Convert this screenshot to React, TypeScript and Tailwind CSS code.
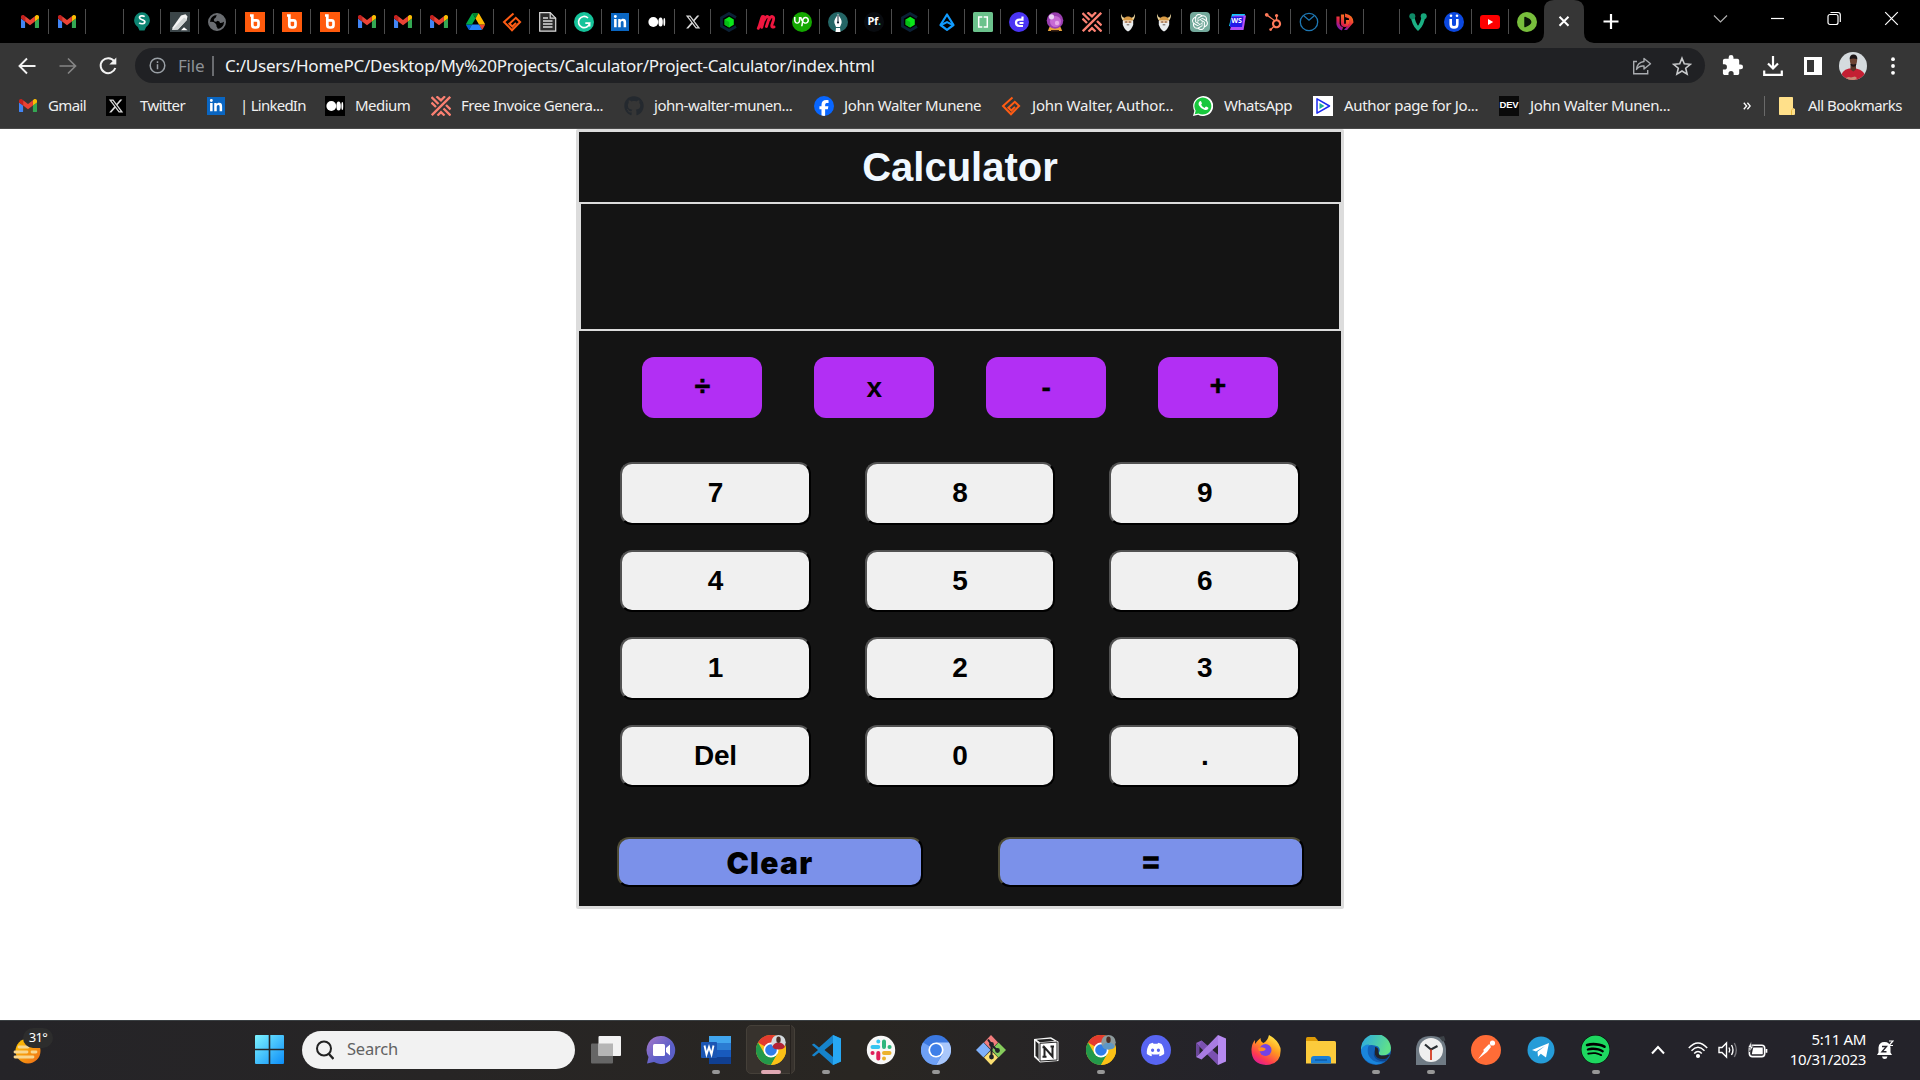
import React from "react";
import { FaXTwitter, FaLinkedinIn, FaFacebookF, FaGithub, FaHubspot, FaUpwork, FaDiscord, FaSpotify } from "react-icons/fa6";
import { SiOpenai } from "react-icons/si";

/* ---------- shared brand marks ---------- */

const Gmail = ({ c = "w-[18px]" }: { c?: string }) => (
  <svg viewBox="52 42 88 66" className={c}>
    <path fill="#4285f4" d="M58 108h14V74L52 59v43c0 3.32 2.69 6 6 6" />
    <path fill="#34a853" d="M120 108h14c3.32 0 6-2.69 6-6V59l-20 15" />
    <path fill="#fbbc04" d="M120 48v26l20-15v-8c0-7.42-8.47-11.65-14.4-7.2" />
    <path fill="#ea4335" d="M72 74V48l24 18 24-18v26L96 92" />
    <path fill="#c5221f" d="M52 51v8l20 15V48l-5.6-4.2c-5.94-4.45-14.4-.22-14.4 7.2" />
  </svg>
);

const Drive = () => (
  <svg viewBox="0 0 87.3 78" className="w-[19px]">
    <path fill="#0066da" d="m6.6 66.85 3.85 6.65c.8 1.4 1.95 2.5 3.3 3.3l13.75-23.8h-27.5c0 1.55.4 3.1 1.2 4.5z" />
    <path fill="#00ac47" d="m43.65 25-13.75-23.8c-1.35.8-2.5 1.9-3.3 3.3l-25.4 44a9.06 9.06 0 0 0-1.2 4.5h27.5z" />
    <path fill="#ea4335" d="m73.55 76.8c1.35-.8 2.5-1.9 3.3-3.3l1.6-2.75 7.65-13.25c.8-1.4 1.2-2.95 1.2-4.5h-27.502l5.852 11.5z" />
    <path fill="#00832d" d="m43.65 25 13.75-23.8c-1.35-.8-2.9-1.2-4.5-1.2h-18.5c-1.6 0-3.15.45-4.5 1.2z" />
    <path fill="#2684fc" d="m59.8 53h-32.3l-13.75 23.8c1.35.8 2.9 1.2 4.5 1.2h50.8c1.6 0 3.15-.45 4.5-1.2z" />
    <path fill="#ffba00" d="m73.4 26.5-12.7-22c-.8-1.4-1.95-2.5-3.3-3.3l-13.75 23.8 16.15 28h27.45c0-1.55-.4-3.1-1.2-4.5z" />
  </svg>
);

const Pin = () => (
  <svg viewBox="0 0 20 22" className="h-[21px] w-[18px]">
    <path fill="#0d8573" d="M10 0.8a8.8 8.8 0 0 1 8.8 8.8c0 3.4-2 5.6-4.2 7.6L12.8 21H7.2L5.4 17.2C3.2 15.2 1.2 13 1.2 9.6A8.8 8.8 0 0 1 10 .8z" />
    <path d="M13 5.6C11.5 4.4 7.2 4.2 7.2 6.8c0 2.7 6 1.7 6 4.6 0 2.700-4.600 2.500-6.400 1.100" fill="none" stroke="#fff" strokeWidth="1.9" />
  </svg>
);

const Blade = () => (
  <svg viewBox="0 0 20 20" className="size-5">
    <rect width="20" height="20" fill="#3b4548" />
    <path d="M2.500 15.500 11 3.500 15.500 2.200 17.500 4.500 16.500 8.500 8 17.500 2.200 18z" fill="#f4f4f4" />
    <path d="M2.200 18 14 5.500 17 7.500 8 17.500z" fill="#d2d6d6" />
    <path d="M11 18.200l3-3 3.600 3z" fill="#fff" />
  </svg>
);

const Globe = () => (
  <svg viewBox="0 0 20 20" className="size-5">
    <circle cx="10" cy="10" r="8" fill="none" stroke="#6a6d71" strokeWidth="2" />
    <path d="M9.500 1.500Q10 5 7.500 6.500q-1.500 1.500 0 3 2 .5 3-.8 2.500.5 2.500 2.300 2 .5 5-2Q17 2.500 9.500 1.500zM2 10q4-.8 6 1t1.500 3.500Q11 16 11 18.500 3 18 2 10z" fill="#6a6d71" />
  </svg>
);

const BSquare = () => (
  <svg viewBox="0 0 20 20" className="size-5">
    <rect width="20" height="20" fill="#ff5a0c" />
    <path d="M5 3.500h3.700M7.300 3.500v8.500M7.300 8.300h4.200q2 0 2 2v2.700q0 2.500-2.500 2.500h-1.200q-2.500 0-2.500-2.500z" fill="none" stroke="#fff" strokeWidth="2.700" />
  </svg>
);

const OrangeDiamond = () => (
  <svg viewBox="0 0 20 20" className="size-5">
    <path d="M11.500 1.500 2 10l8 8.200L18.100 10l-4.300-4.200-6.400 6 3 2.700 3.600-3.600" fill="none" stroke="#ff5c14" strokeWidth="2" />
  </svg>
);

const Doc = () => (
  <svg viewBox="0 0 20 20" className="size-5" fill="none" stroke="#dcdcdc" strokeWidth="1.200">
    <path d="M1.700.7h10.500l5.500 5.500v13H1.700z" fill="#2c2c2c" />
    <path d="M12.200.7v5.500h5.500" />
    <path d="M5 6h5M5 9h9.500M5 12h9.500M5 15h9.500" strokeWidth="1.400" />
  </svg>
);

const Grammarly = () => (
  <svg viewBox="0 0 20 20" className="size-5">
    <circle cx="10" cy="10" r="10" fill="#15c39a" />
    <path d="M14 6a5.600 5.600 0 1 0 1.600 5.200h-4.300M15.600 14.600v-3.800" fill="none" stroke="#fff" strokeWidth="1.700" />
  </svg>
);

const LinkedIn = () => (
  <span className="flex size-[18px] items-center justify-center bg-[#0a66c2]">
    <FaLinkedinIn className="size-[14px] text-white" />
  </span>
);

const MediumDots = () => (
  <svg viewBox="0 0 20 20" className="size-5" fill="#fff">
    <circle cx="6.300" cy="10" r="4.900" />
    <ellipse cx="13.600" cy="10" rx="2.200" ry="4.500" />
    <ellipse cx="17.300" cy="10" rx=".9" ry="4.100" />
  </svg>
);

const Cube = () => (
  <svg viewBox="0 0 20 20" className="size-5">
    <path d="M17 5.500 10 1.500 2.500 5.700v8.600L10 18.500l7-4" fill="none" stroke="#0b2136" strokeWidth="2.800" />
    <path d="M10.200 4.800 14.800 7.500v5.200l-4.600 2.700-4.600-2.700V7.500z" fill="#0be61a" />
    <path d="M10.200 10v5.400l-4.600-2.700V7.500z" fill="#06bd16" />
  </svg>
);

const Meetup = () => (
  <svg viewBox="0 0 22 20" className="h-[18px] w-[21px]">
    <path d="M3 17C5.500 12 6 6 7.500 4q2-1 2 2L6.800 16M9.500 8q2-4.500 4-4t1.200 3L12 15M14.700 8q2-4.500 4-4t1 4.500l-1.700 5q-.3 3 2.500 2" fill="none" stroke="#f0163f" strokeWidth="3.200" strokeLinecap="round" strokeLinejoin="round" />
  </svg>
);

const Upwork = () => (
  <span className="flex size-5 items-center justify-center rounded-full bg-[#14a800]">
    <FaUpwork className="size-[15px] text-white" />
  </span>
);

const Pen = () => (
  <svg viewBox="0 0 20 20" className="size-5">
    <circle cx="10" cy="10" r="10" fill="#246666" />
    <path d="M10 1.500c1 3.500 4.200 5.500 3.600 9.500L12 15H8l-1.600-4C5.800 7 9 5 10 1.500z" fill="#fff" />
    <path d="M8 16h4l.5 4h-5z" fill="#fff" />
    <path d="M10 3v7" stroke="#123" strokeWidth="1" />
    <circle cx="10" cy="10.500" r="1.100" fill="#123" />
  </svg>
);

const Pf = () => (
  <span className="flex size-5 items-center justify-center rounded-full bg-[#080b0f] text-[11px] font-bold tracking-tight text-white">
    Pf<span className="text-[#25b9b0]">.</span>
  </span>
);

const BlueA = () => (
  <svg viewBox="0 0 20 20" className="size-5">
    <path d="M10 2.500 3.500 13 10 17.800 16.500 13z" fill="none" stroke="#119cff" strokeWidth="2.200" strokeLinejoin="round" />
    <path d="M4 13l6-3 6 3" fill="none" stroke="#119cff" strokeWidth="2" />
  </svg>
);

const Brackets = () => (
  <svg viewBox="0 0 20 20" className="size-5">
    <rect width="20" height="20" rx="1.500" fill="#6bc28c" />
    <path d="M9.300 5H5.700v10H9.300M10.700 5h3.600v10H10.700" fill="none" stroke="#fff" strokeWidth="1.500" />
  </svg>
);

const PurpleC = () => (
  <svg viewBox="0 0 20 20" className="size-5">
    <circle cx="10" cy="10" r="10" fill="#4a34f5" />
    <path d="M13.500 4.500v3.200h-3Q7 7.700 7 10.800t3.500 3.200h3.500M14.500 11h-4" fill="none" stroke="#fff" strokeWidth="2.200" />
  </svg>
);

const Crystal = () => (
  <svg viewBox="0 0 20 20" className="size-5">
    <path d="M4.500 15h11l1.700 4H2.800z" fill="#e9a33a" />
    <path d="M6 18h8v1.500H6z" fill="#3a2010" />
    <circle cx="10" cy="8.500" r="8.300" fill="#9a3fb0" />
    <circle cx="10.500" cy="9.500" r="5.500" fill="#c66ad4" />
    <circle cx="6.500" cy="4.800" r="2.600" fill="#ead0f2" />
    <circle cx="12" cy="11" r="2.200" fill="#e6a8ea" />
  </svg>
);

const Lattice = () => (
  <svg viewBox="0 0 20 20" className="size-5" fill="none" stroke="#fb8072" strokeWidth="2.300">
    <path d="M.8 19.200 19.200.8M.5 1l7 7M5.500.3 10 4.300 14 .3M12.500 12.500 19.500 19.500M6.500 19.500l3.500-3.300 3.500 3.300M.5 6.500 5 11M15 9l4.500 4.500" />
  </svg>
);

const Viking = () => (
  <svg viewBox="0 0 20 20" className="size-5">
    <path d="M3 1.500C4 5 5 5.500 7 6l-1.500 3C3.500 7.500 2.800 4.500 3 1.500zM17 1.500C16 5 15 5.500 13 6l1.500 3c2-1.500 2.700-4.500 2.500-7.500z" fill="#f0d9a0" />
    <path d="M5 9c0-6 10-6 10 0z" fill="#d89a45" />
    <path d="M4.800 8.500h10.400v4.200q-1.700 5-5.200 6.800-3.500-1.800-5.200-6.800z" fill="#e9ecee" />
    <path d="M6.500 9h7v2h-7z" fill="#e3b691" />
    <path d="M7.300 10h1.700M11 10h1.700M8.700 12.800h2.600" stroke="#4a3a30" strokeWidth=".8" />
  </svg>
);

const Gpt = () => (
  <span className="flex size-5 items-center justify-center rounded-[4px] bg-[#74aa9c]">
    <SiOpenai className="size-4 text-white" />
  </span>
);

const WS = () => (
  <span className="relative flex size-[18px] items-center justify-center">
    <svg viewBox="0 0 18 18" className="absolute inset-0 size-[18px]">
      <path d="M4 1h13l-2 12H1z" fill="#12c8f5" />
      <path d="M6 2.500h12L15.500 17H2z" fill="#b44df8" />
      <path d="M3.500 3.500h12L14 14H1.800z" fill="#2418e8" />
    </svg>
    <span className="relative text-[7px] font-bold text-white">WS</span>
  </span>
);

const BlueRing = () => (
  <svg viewBox="0 0 20 20" className="size-5" fill="none" stroke="#1e78b4" strokeWidth="1.300">
    <circle cx="10" cy="10" r="8.700" />
    <path d="M4.500 3.500 10 8.200l5.500-4.700" />
  </svg>
);

const Flame = () => (
  <svg viewBox="0 0 20 20" className="size-5">
    <defs>
      <linearGradient id="fl" x1="0" y1="1" x2=".6" y2="0">
        <stop offset="0" stopColor="#6a1bc0" /><stop offset=".45" stopColor="#e01e4a" /><stop offset="1" stopColor="#ff7a18" />
      </linearGradient>
    </defs>
    <path d="M3 4.500V12q.5 3.500 4.500 5M7.500 2.500V11q0 2.500 2.500 2.500t2.500-2.500V8" fill="none" stroke="url(#fl)" strokeWidth="3.200" />
    <path d="M10 1.500q8.500 1.500 8.500 9L12 18H9l5-6V6.500L10 5z" fill="url(#fl)" />
  </svg>
);

const GreenV = () => (
  <svg viewBox="0 0 20 20" className="size-5">
    <path d="M4.500 4q1 8 5.500 12.500Q14.500 12 15.500 4" fill="none" stroke="#1bb184" strokeWidth="3.600" strokeLinecap="round" />
    <circle cx="4.300" cy="4.200" r="3" fill="#0f8a66" /><circle cx="15.700" cy="4.200" r="3" fill="#17a67b" />
  </svg>
);

const UBlue = () => (
  <svg viewBox="0 0 20 20" className="size-5">
    <circle cx="10" cy="10" r="10" fill="#0b48e0" />
    <path d="M6.700 7v5.200q0 3.200 3.300 3.200t3.300-3.200V7" fill="none" stroke="#fff" strokeWidth="2.600" />
    <circle cx="7" cy="3.800" r="1.300" fill="#fff" /><circle cx="13" cy="3.800" r="1.300" fill="#fff" />
  </svg>
);

const YouTube = () => (
  <svg viewBox="0 0 20 14" className="w-5">
    <rect width="20" height="14" rx="3" fill="#f00" />
    <path d="M8 4l5.200 3L8 10z" fill="#fff" />
  </svg>
);

const GreenPlay = () => (
  <svg viewBox="0 0 20 20" className="size-5">
    <circle cx="10" cy="10" r="10" fill="#78be3c" />
    <path d="M8 5.500Q13.500 7.500 13.700 10 13.500 12.500 8 14.500z" fill="#0a1408" stroke="#0a1408" strokeWidth="1.500" strokeLinejoin="round" />
  </svg>
);

const XMark = () => <FaXTwitter className="size-4 text-[#d8d8d8]" />;

const wideTabs: React.ReactNode[] = [<Gmail />, <Gmail />, null, <Pin />, <Blade />, <Globe />, <BSquare />, <BSquare />, <BSquare />];
const narrowTabs: React.ReactNode[] = [
  <Gmail />, <Gmail />, <Gmail />, <Drive />, <OrangeDiamond />, <Doc />, <Grammarly />, <LinkedIn />, <MediumDots />, <XMark />,
  <Cube />, <Meetup />, <Upwork />, <Pen />, <Pf />, <Cube />, <BlueA />, <Brackets />, <PurpleC />, <Crystal />, <Lattice />,
  <Viking />, <Viking />, <Gpt />, <WS />, <FaHubspot className="size-[18px] text-[#ff7a59]" />, <BlueRing />, <Flame />, null,
  <GreenV />, <UBlue />, <YouTube />, <GreenPlay />,
];

function TabStrip() {
  return (
    <div className="flex h-[43px] shrink-0 bg-black pl-[11px]">
      {wideTabs.map((t, i) => (
        <div key={i} className="flex w-[37.5px] shrink-0 items-center">
          <div className="flex flex-1 justify-center">{t}</div>
          <div className="-ml-px h-[25px] w-px bg-[#4c4c4c]" />
        </div>
      ))}
      {narrowTabs.map((t, i) => (
        <div key={i} className="flex w-[36.25px] shrink-0 items-center">
          <div className="flex flex-1 justify-center">{t}</div>
          <div className={i < 32 ? "-ml-px h-[25px] w-px bg-[#4c4c4c]" : "hidden"} />
        </div>
      ))}
      <svg viewBox="0 0 60 43" className="-ml-[10px] h-[43px] w-[60px] shrink-0">
        <path d="M0 43Q9 42 9 33V10Q9 0 19 0H39Q49 0 49 10V33Q49 42 59 43z" fill="#363636" />
        <path d="M24.500 16.800l9 9M33.500 16.800l-9 9" stroke="#fff" strokeWidth="2" />
      </svg>
      <svg viewBox="0 0 20 20" className="mt-[11px] ml-[6px] size-5 shrink-0"><path d="M10 3v15M2.500 10.500h15" stroke="#fff" strokeWidth="2.200" /></svg>
      <div className="mr-[19px] ml-auto flex items-start gap-[38px] pt-[9px]">
        <svg viewBox="0 0 19 19" className="size-[19px]" fill="none" stroke="#b0b0b0" strokeWidth="1.200"><path d="M3 6.500l6.500 6.500L16 6.500" /></svg>
        <svg viewBox="0 0 19 19" className="size-[19px]" stroke="#fff" strokeWidth="1.200"><path d="M3 9.500h13" /></svg>
        <svg viewBox="0 0 19 19" className="size-[19px]" fill="none" stroke="#fff" strokeWidth="1.200"><rect x="3" y="5.500" width="10" height="10" rx="2" /><path d="M5.500 3.500H13q2.300 0 2.300 2.300V13" /></svg>
        <svg viewBox="0 0 19 19" className="size-[19px]" stroke="#fff" strokeWidth="1.200"><path d="M3.200 3.200l12.600 12.600M15.800 3.200 3.200 15.800" /></svg>
      </div>
    </div>
  );
}

function Toolbar() {
  return (
    <div className="flex h-[45px] shrink-0 items-center pl-[17px]">
      <svg viewBox="0 0 20 20" className="mr-[21px] size-5" fill="none" stroke="#f2f2f2" strokeWidth="1.900"><path d="M18.500 10H3M10 2.500 2.500 10l7.500 7.500" /></svg>
      <svg viewBox="0 0 20 20" className="mr-[20px] size-5" fill="none" stroke="#858585" strokeWidth="1.700"><path d="M1.500 10H17M10 2.500 17.500 10 10 17.500" /></svg>
      <svg viewBox="0 0 20 20" className="mr-[17px] size-5"><path d="M16.200 5.200A7.500 7.500 0 1 0 17.300 12" fill="none" stroke="#f2f2f2" strokeWidth="2" /><path d="M18.300 1.500v7h-7z" fill="#f2f2f2" /></svg>
      <div className="flex h-[35px] w-[1570px] shrink-0 items-center rounded-full bg-[#202124] pr-[13px] pl-[14px]">
        <svg viewBox="0 0 17 17" className="size-[17px]" fill="none" stroke="#9aa0a6" strokeWidth="1.500"><circle cx="8.500" cy="8.500" r="7.300" /><path d="M8.500 7.300v5M8.500 4.200v1.800" /></svg>
        <span className="ml-3 w-[34px] text-[17px] tracking-[-0.2px] text-[#8d9196]">File</span>
        <div className="h-5 w-[2px] bg-[#6a6c70]" />
        <span className="ml-[11px] text-[17px] tracking-[-0.25px] whitespace-nowrap text-[#f1f3f4]">C:/Users/HomePC/Desktop/My%20Projects/Calculator/Project-Calculator/index.html</span>
        <svg viewBox="0 0 20 20" className="ml-auto size-5" fill="none" stroke="#a9acb0" strokeWidth="1.400"><path d="M5 5.500H1.700v12.300h14V14" /><path d="M12 2.500l6.500 5.200L12 13v-3Q7 9.500 4.500 13.500 5 6.500 12 5.500z" strokeLinejoin="round" /></svg>
        <svg viewBox="0 0 20 20" className="ml-5 size-5" fill="none" stroke="#c8cacc" strokeWidth="1.600"><path d="M10 2.200l2.300 5.600 6 .5-4.600 3.900 1.400 5.900L10 15l-5.100 3.100 1.400-5.900-4.600-3.900 6-.5z" /></svg>
      </div>
      <svg viewBox="0 0 24 24" className="ml-[16px] size-[23px]" fill="#fff"><path d="M20.500 11H19V7c0-1.100-.9-2-2-2h-4V3.500a2.500 2.500 0 0 0-5 0V5H4c-1.100 0-2 .9-2 2v3.800h1.500a2.700 2.700 0 0 1 0 5.400H2V20c0 1.100.9 2 2 2h3.800v-1.500a2.700 2.700 0 0 1 5.400 0V22H17c1.100 0 2-.9 2-2v-4h1.500a2.500 2.500 0 0 0 0-5z" /></svg>
      <svg viewBox="0 0 20 20" className="ml-[19px] size-5" fill="none" stroke="#fff" strokeWidth="2.200"><path d="M10 0v12M5 7.500l5 5 5-5M1.200 14.500v4.300h17.600v-4.300" /></svg>
      <svg viewBox="0 0 20 20" className="ml-[20px] size-5"><path d="M1 1h18v18H1zM4 4v12h7V4z" fill="#fff" fillRule="evenodd" /></svg>
      <svg viewBox="0 0 28 28" className="ml-[16px] size-7">
        <clipPath id="av"><circle cx="14" cy="14" r="14" /></clipPath>
        <g clipPath="url(#av)">
          <rect width="28" height="28" fill="#d5dbde" />
          <path d="M1 28q1-10 9-11.500h7q9 1.500 11 11.500z" fill="#c41f33" />
          <path d="M11.500 12h5.500v5.500l-2.700 2-2.800-2z" fill="#5b3629" />
          <ellipse cx="14.500" cy="8.500" rx="3.600" ry="5.200" fill="#6d4434" />
          <path d="M10.600 7.500q0-5 3.900-5t3.900 5q-3.900-2-7.800 0zM11.500 11.500q3 1.800 6 0-.4 3.300-3 3.300t-3-3.300z" fill="#1c1517" />
          <path d="M6 26.500q3-2.500 6-1l4-1 2 1.500-2 2H8z" fill="#c98a76" />
        </g>
      </svg>
      <svg viewBox="0 0 6 20" className="ml-[23px] h-5 w-[6px]" fill="#fff"><circle cx="3" cy="3.200" r="1.900" /><circle cx="3" cy="10" r="1.900" /><circle cx="3" cy="16.800" r="1.900" /></svg>
    </div>
  );
}

const bookmarks: { w: string; box: string; t: string; label: string; icon: React.ReactNode }[] = [
  { w: "w-[87px]", box: "w-[29px]", t: "tracking-[-0.6px]", label: "Gmail", icon: <Gmail /> },
  { w: "w-[101px]", box: "w-[34px]", t: "tracking-[-0.6px]", label: "Twitter", icon: <span className="flex size-5 items-center justify-center bg-black"><XMark /></span> },
  { w: "w-[118px]", box: "w-[33px]", t: "tracking-[-0.75px]", label: "| LinkedIn", icon: <LinkedIn /> },
  { w: "w-[106px]", box: "w-[30px]", t: "tracking-[-0.55px]", label: "Medium", icon: <span className="size-5 bg-black"><MediumDots /></span> },
  { w: "w-[193px]", box: "w-[30px]", t: "tracking-[-0.47px]", label: "Free Invoice Genera...", icon: <Lattice /> },
  { w: "w-[190px]", box: "w-[30px]", t: "tracking-[-0.47px]", label: "john-walter-munen...", icon: <FaGithub className="size-5 text-[#24292f]" /> },
  { w: "w-[187px]", box: "w-[30px]", t: "tracking-[-0.37px]", label: "John Walter Munene", icon: <span className="flex size-5 items-end justify-center overflow-hidden rounded-full bg-[#0866ff]"><FaFacebookF className="size-4 text-white" /></span> },
  { w: "w-[192px]", box: "w-[31px]", t: "tracking-[-0.2px]", label: "John Walter, Author...", icon: <OrangeDiamond /> },
  { w: "w-[120px]", box: "w-[31px]", t: "tracking-[-0.55px]", label: "WhatsApp", icon: <WhatsAppMark /> },
  { w: "w-[186px]", box: "w-[31px]", t: "tracking-[-0.35px]", label: "Author page for Jo...", icon: <PlayBox /> },
  { w: "w-[244px]", box: "w-[31px]", t: "tracking-[-0.37px]", label: "John Walter Munen...", icon: <span className="flex size-5 items-center justify-center bg-[#0a0a0a] font-['Liberation_Sans'] text-[9.5px] font-bold tracking-[-0.2px] text-white">DEV</span> },
];

function WhatsAppMark() {
  return (
    <svg viewBox="0 0 20 20" className="size-5">
      <path d="M0 20l1.400-5.200A10 10 0 1 1 5.200 18.700z" fill="#fff" />
      <path d="M1.700 18.300l1-3.600a8.500 8.500 0 1 1 2.800 2.700z" fill="#18c83c" />
      <path d="M6.500 5.500q1.300-1 1.800.3l.6 1.500q.1.600-.8 1.400 1.200 2.200 3.500 3.200l1-1.200q.4-.3 1 0l1.500.8q.6.400 0 1.500-1.400 1.700-3.800.8Q7.300 12.300 5.700 9q-.6-2.200.8-3.500z" fill="#fff" />
    </svg>
  );
}

function PlayBox() {
  return (
    <svg viewBox="0 0 20 20" className="size-5">
      <rect width="20" height="20" fill="#fff" />
      <path d="M4 2.800 16.500 10 4 17.200z" fill="none" stroke="#1a2af0" strokeWidth="1.500" strokeLinejoin="round" />
      <path d="M6.500 7l5 3-5 3z" fill="#1dae98" />
    </svg>
  );
}

function Bookmarks() {
  return (
    <div className="flex h-[41px] shrink-0 items-center border-b border-[#4a4a4a] pb-[5px] pl-[19px] text-[15px] text-[#f0f0f0]">
      {bookmarks.map((b) => (
        <div key={b.label} className={`flex shrink-0 items-center ${b.w}`}>
          <div className={`flex shrink-0 ${b.box}`}>{b.icon}</div>
          <span className={`whitespace-nowrap ${b.t}`}>{b.label}</span>
        </div>
      ))}
      <svg viewBox="0 0 8 8" className="size-2" fill="none" stroke="#fff" strokeWidth="1.300"><path d="M.8.8 3.600 4 .8 7.200M4.400.8 7.200 4 4.400 7.200" /></svg>
      <div className="ml-[13px] h-5 w-px bg-[#6a6a6a]" />
      <svg viewBox="0 0 16 18" className="ml-[14px] h-[18px] w-4"><path d="M0 .8Q0 0 .8 0h12.400q.8 0 .8.8V11l2 1v5q0 1-1 1H.8Q0 18 0 17.200z" fill="#ffe08a" /><path d="M12.500 18v-4.500q0-1 1-1.500h1" fill="none" stroke="#e8b93c" /></svg>
      <span className="ml-[13px] tracking-[-0.55px] whitespace-nowrap">All Bookmarks</span>
    </div>
  );
}

/* ---------- calculator ---------- */

const operators = [
  { sign: "÷", cls: "h-[61px] w-[120px] rounded-xl bg-[#b22ff4] pb-[4px] text-[28px] leading-none text-black [-webkit-text-stroke:0.7px_black]" },
  { sign: "x", cls: "h-[61px] w-[120px] rounded-xl bg-[#b22ff4] text-[28px] leading-none text-black" },
  { sign: "-", cls: "h-[61px] w-[120px] rounded-xl bg-[#b22ff4] text-[28px] leading-none text-black [-webkit-text-stroke:0.4px_black]" },
  { sign: "+", cls: "h-[61px] w-[120px] rounded-xl bg-[#b22ff4] pb-[3px] text-[28px] leading-none text-black [-webkit-text-stroke:0.6px_black]" },
];
const keys = ["7", "8", "9", "4", "5", "6", "1", "2", "3", "Del", "0", "."];

function Calculator() {
  return (
    <div className="mx-auto flex h-[780px] w-[768px] flex-col rounded-[2px] border-[3px] border-[#dcdcdc] bg-[#141414] font-['Liberation_Sans',sans-serif] font-bold">
      <h1 className="flex h-[70px] shrink-0 items-center justify-center text-[40px] leading-none text-[#f0f8ff]">Calculator</h1>
      <div className="h-[129px] shrink-0 border-2 border-[#dcdcdc] bg-[#141414]" />
      <div className="flex justify-between pt-[26px] pr-[63px] pl-[63.400px]">
        {operators.map((o) => (
          <button key={o.sign} className={o.cls}>{o.sign}</button>
        ))}
      </div>
      <div className="mt-[44px] grid grid-cols-3 gap-x-[54px] gap-y-[25px] pr-[41px] pl-[41px]">
        {keys.map((k) => (
          <button key={k} className="h-[62.600px] rounded-xl border-2 border-t-[#525252] border-r-black border-b-black border-l-[#525252] bg-[#f0f0f0] text-[28px] leading-none tracking-[-0.3px] text-black">{k}</button>
        ))}
      </div>
      <div className="mt-[50px] flex justify-between pr-[37px] pl-[38px]">
        <button className="h-[50px] w-[306px] rounded-xl border-2 border-t-[#4e4b35] border-r-black border-b-black border-l-[#4e4b35] bg-[#7b91ea] pt-[2px] font-[Inter] text-[30px] leading-none font-black tracking-[1.300px] text-black">Clear</button>
        <button className="h-[50px] w-[306px] rounded-xl border-2 border-t-[#4e4b35] border-r-black border-b-black border-l-[#4e4b35] bg-[#7b91ea] pt-[2px] text-[28px] leading-none text-black [-webkit-text-stroke:1.500px_black]">=</button>
      </div>
    </div>
  );
}

/* ---------- taskbar ---------- */

const Chrome = ({ shirt }: { shirt: string }) => (
  <svg viewBox="0 0 30 30" className="size-[30px]">
    <circle cx="15" cy="15" r="15" fill="#fbc116" />
    <path d="M15 15 2 7.500A15 15 0 0 1 28 7.500z" fill="#e33b2e" />
    <path d="M2 7.500A15 15 0 0 0 15 30l6.500-11.200L15 15 8.500 18.700z" fill="#23994a" />
    <path d="M15 7.500h13A15 15 0 0 1 15 30l6.500-11.200z" fill="#fbc116" />
    <circle cx="15" cy="15" r="7.500" fill="#fff" /><circle cx="15" cy="15" r="5.800" fill="#2f7de9" />
    <circle cx="22.500" cy="7.200" r="7.200" fill={shirt === "red" ? "#d5dbde" : "#8d9a9c"} />
    <path d="M16.500 12q1-4.500 6-4.500t6.500 4.500q-2 2.500-6.500 2.500t-6-2.500z" fill={shirt === "red" ? "#b32436" : "#5f97c4"} />
    <ellipse cx="22.500" cy="4.800" rx="2.200" ry="3.200" fill="#4a2d25" />
  </svg>
);

const ink = "size-[30px]";
const apps: { icon: React.ReactNode; run?: boolean; active?: boolean }[] = [
  { icon: <svg viewBox="0 0 30 30" className={ink}><rect y="8.500" width="22" height="20" rx="1" fill="#666" /><rect x="7.500" y="1" width="22.500" height="20" rx="1" fill="#f2f2f2" /><path d="M7.500 8.500H22V21H7.500z" fill="#b5b5b5" /></svg> },
  { icon: <svg viewBox="0 0 30 30" className={ink}><defs><linearGradient id="mt" x1="0" x2="1" y1="0" y2="1"><stop stopColor="#a878c8" /><stop offset=".6" stopColor="#5b5fc8" /></linearGradient></defs><path d="M15 1a14 14 0 1 1-7 26L1 28.500 2.500 22A14 14 0 0 1 15 1z" fill="url(#mt)" /><rect x="7" y="9" width="12" height="12" rx="1.500" fill="#fff" /><path d="M20 13l4-3.500v11L20 17z" fill="#fff" /></svg> },
  { run: true, icon: <svg viewBox="0 0 30 30" className={ink}><path d="M8 1h22v7.500H8z" fill="#41a5ee" /><path d="M8 8h22v7H8z" fill="#2b7cd3" /><path d="M8 15h22v7H8z" fill="#185abd" /><path d="M8 22h22v7H8z" fill="#103f91" /><rect y="7" width="16" height="16" rx="1" fill="#1b56b4" /><path d="M3.500 10.500l2 9L8 12l2.500 7.500 2-9" fill="none" stroke="#fff" strokeWidth="1.900" /></svg> },
  { run: true, active: true, icon: <Chrome shirt="red" /> },
  { run: true, icon: <svg viewBox="0 0 30 30" className={ink}><path d="M22 0 30 3.500v23L22 30 8 17.500 3 21.500.8 20.200 7 15 .8 9.800 3 8.500l5 4zM22 8l-8.500 7 8.500 7z" fill="#1683cb" fillRule="evenodd" /><path d="M22 0l8 3.500v23L22 30z" fill="#27a7f2" /></svg> },
  { icon: <svg viewBox="0 0 30 30" className={ink}><circle cx="15" cy="15" r="14.200" fill="#f8f8f8" /><g strokeWidth="4" strokeLinecap="round"><path d="M12.300 6.500v.1M6.500 12h5.800" stroke="#36c5f0" /><path d="M18 6.500v5.500M23.500 12h.1" stroke="#2eb67d" /><path d="M18 23.500v.1M18 18h5.500" stroke="#ecb22e" /><path d="M12.300 18v5.500M6.500 18h.1" stroke="#e01e5a" /></g></svg> },
  { run: true, icon: <svg viewBox="0 0 30 30" className={ink}><circle cx="15" cy="15" r="15" fill="#3b78e0" /><path d="M15 7.500h13A15 15 0 0 1 15 30l6.500-11z" fill="#a9c7fb" /><path d="M2 7.500A15 15 0 0 0 15 30l6.500-11.200L15 15z" fill="#6ea0f5" /><circle cx="15" cy="15" r="7.600" fill="#fff" /><circle cx="15" cy="15" r="5.900" fill="#3f7fe8" /></svg> },
  { icon: <svg viewBox="0 0 30 30" className={ink}><path d="M15 0l7 7.500-7 7-7-7z" fill="#f27d7d" /><path d="M7.500 7.500l7 7.500-7 7.500L0 15z" fill="#7fb0fa" /><path d="M22.500 7.500 30 15l-7.500 7.500-7-7.500z" fill="#86cc5c" /><path d="M15 15.500l7 7L15 30l-7-7.500z" fill="#fbdf72" /><path d="M12 4.500l3.500 5V22M15.500 10l6 5.500" fill="none" stroke="#20222a" strokeWidth="2" /><circle cx="15.500" cy="9.500" r="2.400" fill="#20222a" /><circle cx="21.500" cy="15.500" r="2.400" fill="#20222a" /><circle cx="15.500" cy="22" r="2.400" fill="#20222a" /></svg> },
  { icon: <svg viewBox="0 0 30 30" className={ink}><path d="M3 4 20 2.200l7.500 4.500V26L9 27.500 3 22z" fill="#f6f6f6" /><path d="M5.500 4.800 19.500 3.700l4 2.400L9 7.200z" fill="#222" /><path d="M4.500 6 7.600 8.800v15.400L4.500 20.500z" fill="#222" /><path d="M9 8.300l17-1.200V25L9 26z" fill="#fff" stroke="#222" /><path d="M13.500 21.500V12.300l8 9.200v-10M11.500 12.300h2.500M11.500 21.800h4M19.500 11.500h3.500" fill="none" stroke="#222" strokeWidth="2" /></svg> },
  { run: true, icon: <Chrome shirt="blue" /> },
  { icon: <span className="flex size-[30px] items-center justify-center rounded-full bg-[#5865f2]"><FaDiscord className="size-[19px] text-white" /></span> },
  { icon: <svg viewBox="0 0 30 30" className={ink}><path d="M0 8l5.500-2.500L22 20v10L0 8z" fill="#8a5cc0" /><path d="M0 8l3.500 3v8L0 22z" fill="#6a4799" /><path d="M5.500 5.500 22 20v10L3.500 11z" fill="#7a50b0" /><path d="M0 22l5.500 2.500L22 10V0L3.500 19z" fill="#a87ce2" /><path d="M22 0l8 3.500v23L22 30z" fill="#b68af0" /></svg> },
  { icon: <svg viewBox="0 0 30 30" className={ink}><defs><linearGradient id="ff" x1=".8" x2=".2" y1="0" y2="1"><stop stopColor="#fff04a" /><stop offset=".4" stopColor="#ff9a1f" /><stop offset=".75" stopColor="#ff3b50" /><stop offset="1" stopColor="#d815a0" /></linearGradient></defs><path d="M18 0q9 5 11.500 13Q31 29 15 30 0 29 .5 14 1 8 4 5v4q3-4 5.500-6 0 4 3 5 4-2 5.500-8z" fill="url(#ff)" /><circle cx="14.500" cy="15" r="6" fill="#7542e5" /><path d="M7 13q5-2 8 1-2 3-7 2z" fill="#ff8a25" /></svg> },
  { icon: <svg viewBox="0 0 30 30" className={ink}><path d="M0 3.500Q0 2 1.500 2H9l3 3.500V10H0z" fill="#dd9a06" /><path d="M0 6h28.500Q30 6 30 7.500V28.500H0z" fill="#fccb3c" /><path d="M5 28.500V24q0-3 3-3h14q3 0 3 3v4.500z" fill="#1a7fd6" /><path d="M9 25h12" stroke="#0b539b" strokeWidth="1.200" /></svg> },
  { run: true, icon: <svg viewBox="0 0 30 30" className={ink}><defs><linearGradient id="ed" x1="0" x2="1" y1="0" y2=".3"><stop stopColor="#2aa8e8" /><stop offset="1" stopColor="#5fe08a" /></linearGradient></defs><circle cx="15" cy="15" r="15" fill="#1362b8" /><path d="M0 15A15 15 0 0 1 30 13q0 7-8 7.500-5 0-4-3 2-3-1-6Q8 7 0 15z" fill="url(#ed)" /><path d="M0 15q2-5.500 8-5.500-4 10 4 16 5 3 11 1.500A15 15 0 0 1 0 15z" fill="#1a86dc" /><path d="M17.500 18q1 5 8 4.500l3-1.500-4 5q-8 1-11-4-2-5 1.500-9z" fill="#0c4690" /><path d="M14 12q4 0 3.500 6 0 3 6 2.500l6-1-4 4q-9 2-11.500-4z" fill="#24232a" /></svg> },
  { run: true, icon: <svg viewBox="0 0 30 30" className={ink}><path d="M0 14Q1 1 15 1t15 13v16H0z" fill="#6f7a84" /><path d="M23 2l5-1 1.500 4.500-3 1z" fill="#3c4247" /><circle cx="15" cy="15" r="12" fill="#efefef" /><path d="M9 9.500l6 5 6.500-3.500" fill="none" stroke="#2a2f33" strokeWidth="2.200" /><path d="M15 14.500V25" stroke="#d43a20" strokeWidth="1.800" /></svg> },
  { icon: <svg viewBox="0 0 30 30" className={ink}><circle cx="15" cy="15" r="15" fill="#ff6c37" /><path d="M7 24l7.500-10 3.500-4 2 2-4 5z" fill="#fff" /><circle cx="21.500" cy="8" r="2.600" fill="#fff" /><path d="M13 16l6-6" stroke="#fff" strokeWidth="2.500" /></svg> },
  { icon: <svg viewBox="0 0 30 30" className={ink}><circle cx="15" cy="15" r="13.500" fill="#259cd8" /><path d="M6 15 23 8l-3 14.500-5.200-3.700-2.800 3-.5-5L19 11l-9 5.600z" fill="#fff" /></svg> },
  { run: true, icon: <span className="flex size-[29px] items-center justify-center rounded-full bg-black"><FaSpotify className="size-[29px] text-[#1ed760]" /></span> },
];

function Taskbar() {
  return (
    <div className="flex h-[60px] shrink-0 items-center border-t border-[#3a3f42] bg-linear-to-r from-[#252428] via-[#292622] via-45% to-[#24232a] to-65% pb-[2px] font-['Noto_Sans',sans-serif]">
      <div className="relative ml-[12px] h-[30px] w-[42px] shrink-0">
        <svg viewBox="0 0 30 30" className="size-[30px]">
          <defs><linearGradient id="sun" x1="0" x2="1" y1="0" y2="1"><stop stopColor="#ffc800" /><stop offset="1" stopColor="#ef6a1a" /></linearGradient></defs>
          <circle cx="16" cy="16" r="12.500" fill="url(#sun)" />
          <path d="M7 12h9M3 17h12M20 17h4M3 22h18" stroke="#f8d68e" strokeWidth="2.800" strokeLinecap="round" />
        </svg>
        <span className="absolute -top-[7px] left-[11px] flex h-5 w-[30px] items-center justify-center rounded-full bg-[#2d2d2d] text-[13px] tracking-[-0.6px] text-white">31°</span>
      </div>
      <svg viewBox="0 0 29 29" className="ml-[201px] size-[29px] shrink-0">
        <defs><linearGradient id="win" x1="0" x2="1" y1="0" y2="1"><stop stopColor="#7df3ff" /><stop offset="1" stopColor="#0c8df8" /></linearGradient></defs>
        <path d="M0 1q0-1 1-1h12.700v13.800H0zM15.300 0H28q1 0 1 1v12.800H15.300zM0 15.300h13.700V29H1q-1 0-1-1zM15.300 15.300H29V28q0 1-1 1H15.300z" fill="url(#win)" />
      </svg>
      <div className="ml-[18px] flex h-[38px] w-[273px] shrink-0 items-center rounded-full bg-[#f2f2f2] pl-[14px]">
        <svg viewBox="0 0 18 20" className="h-5 w-[18px]" fill="none" stroke="#222" strokeWidth="2"><circle cx="8" cy="8.500" r="7" /><path d="M12.500 13.500l5 5.500" strokeWidth="2.400" /></svg>
        <span className="ml-[13px] text-[16.500px] tracking-[-0.2px] text-[#626262]">Search</span>
      </div>
      <div className="ml-[3px] flex">
        {apps.map((a, i) => (
          <div key={i} className="relative flex h-[59px] w-[55px] items-center justify-center">
            {a.active && <div className="absolute top-[5px] left-[3px] h-[49px] w-[49px] rounded-[5px] border border-[#454039] bg-[#37322d]" />}
            {a.active && <div className="absolute top-[5px] right-[7px] h-[49px] w-px bg-[#25211e]" />}
            <div className="relative">{a.icon}</div>
            {a.run && <div className={a.active ? "absolute bottom-[5px] h-1 w-5 rounded-full bg-[#e0a9b3]" : "absolute bottom-[5px] h-1 w-2 rounded-full bg-[#979797]"} />}
          </div>
        ))}
      </div>
      <svg viewBox="0 0 14 10" className="ml-[28px] h-[10px] w-[14px] shrink-0" fill="none" stroke="#fff" strokeWidth="2"><path d="M1 8.500l6-6.500 6 6.500" /></svg>
      <svg viewBox="0 0 20 18" className="ml-[23px] h-[18px] w-5 shrink-0" fill="none" stroke="#fff" strokeWidth="1.500"><path d="M.8 7Q10-3 19.200 7M3.500 9.700q6.500-6.800 13 0M6.200 12.500q3.800-4 7.600 0" /><circle cx="10" cy="15" r="1.300" fill="#fff" /></svg>
      <svg viewBox="0 0 20 18" className="ml-[10px] h-[18px] w-5 shrink-0" fill="none" stroke="#fff" strokeWidth="1.400"><path d="M1 6.500h3L8.500 2v14L4 11.500H1zM11 6.500q1.500 2.500 0 5M13.500 4q3 5 0 10" /><path d="M16.300 2q4 7 0 14" stroke="#77767b" /></svg>
      <svg viewBox="0 0 22 18" className="ml-[9px] h-[18px] w-[21px] shrink-0"><rect x="2.500" y="4" width="16" height="12" rx="3" fill="none" stroke="#fff" strokeWidth="1.700" /><path d="M6.500 6.500h10v7H5zM19.500 8h1.800v4h-1.800z" fill="#fff" /><path d="M4.500 0 1 6.500h2.500L2.500 11 7 5H4.500z" fill="#fff" stroke="#24232a" strokeWidth=".6" /></svg>
      <div className="mb-[2px] ml-auto flex flex-col items-end text-[15px] leading-5 tracking-[-0.35px] text-white">
        <span>5:11 AM</span>
        <span>10/31/2023</span>
      </div>
      <svg viewBox="0 0 18 20" className="mr-[26px] ml-[10px] h-5 w-[18px] shrink-0"><path d="M1 15l1.500-2.500V7.500Q3 2 8.500 2t6 5.500v5L16 15zM6 16.500h5.500Q11 19 8.700 19T6 16.500z" fill="#fff" /><path d="M6 6.500h4.500L6 11.700h4.500" fill="none" stroke="#24232a" strokeWidth="1.400" /><path d="M13 1h4l-4 4.500h4" fill="none" stroke="#fff" strokeWidth="1.200" /></svg>
    </div>
  );
}

export default function App() {
  return (
    <div className="flex h-[1080px] w-[1920px] flex-col overflow-hidden bg-white">
      <div className="flex shrink-0 flex-col bg-[#363636] font-['Noto_Sans',sans-serif]">
        <TabStrip />
        <Toolbar />
        <Bookmarks />
      </div>
      <main className="flex-1">
        <Calculator />
      </main>
      <Taskbar />
    </div>
  );
}
